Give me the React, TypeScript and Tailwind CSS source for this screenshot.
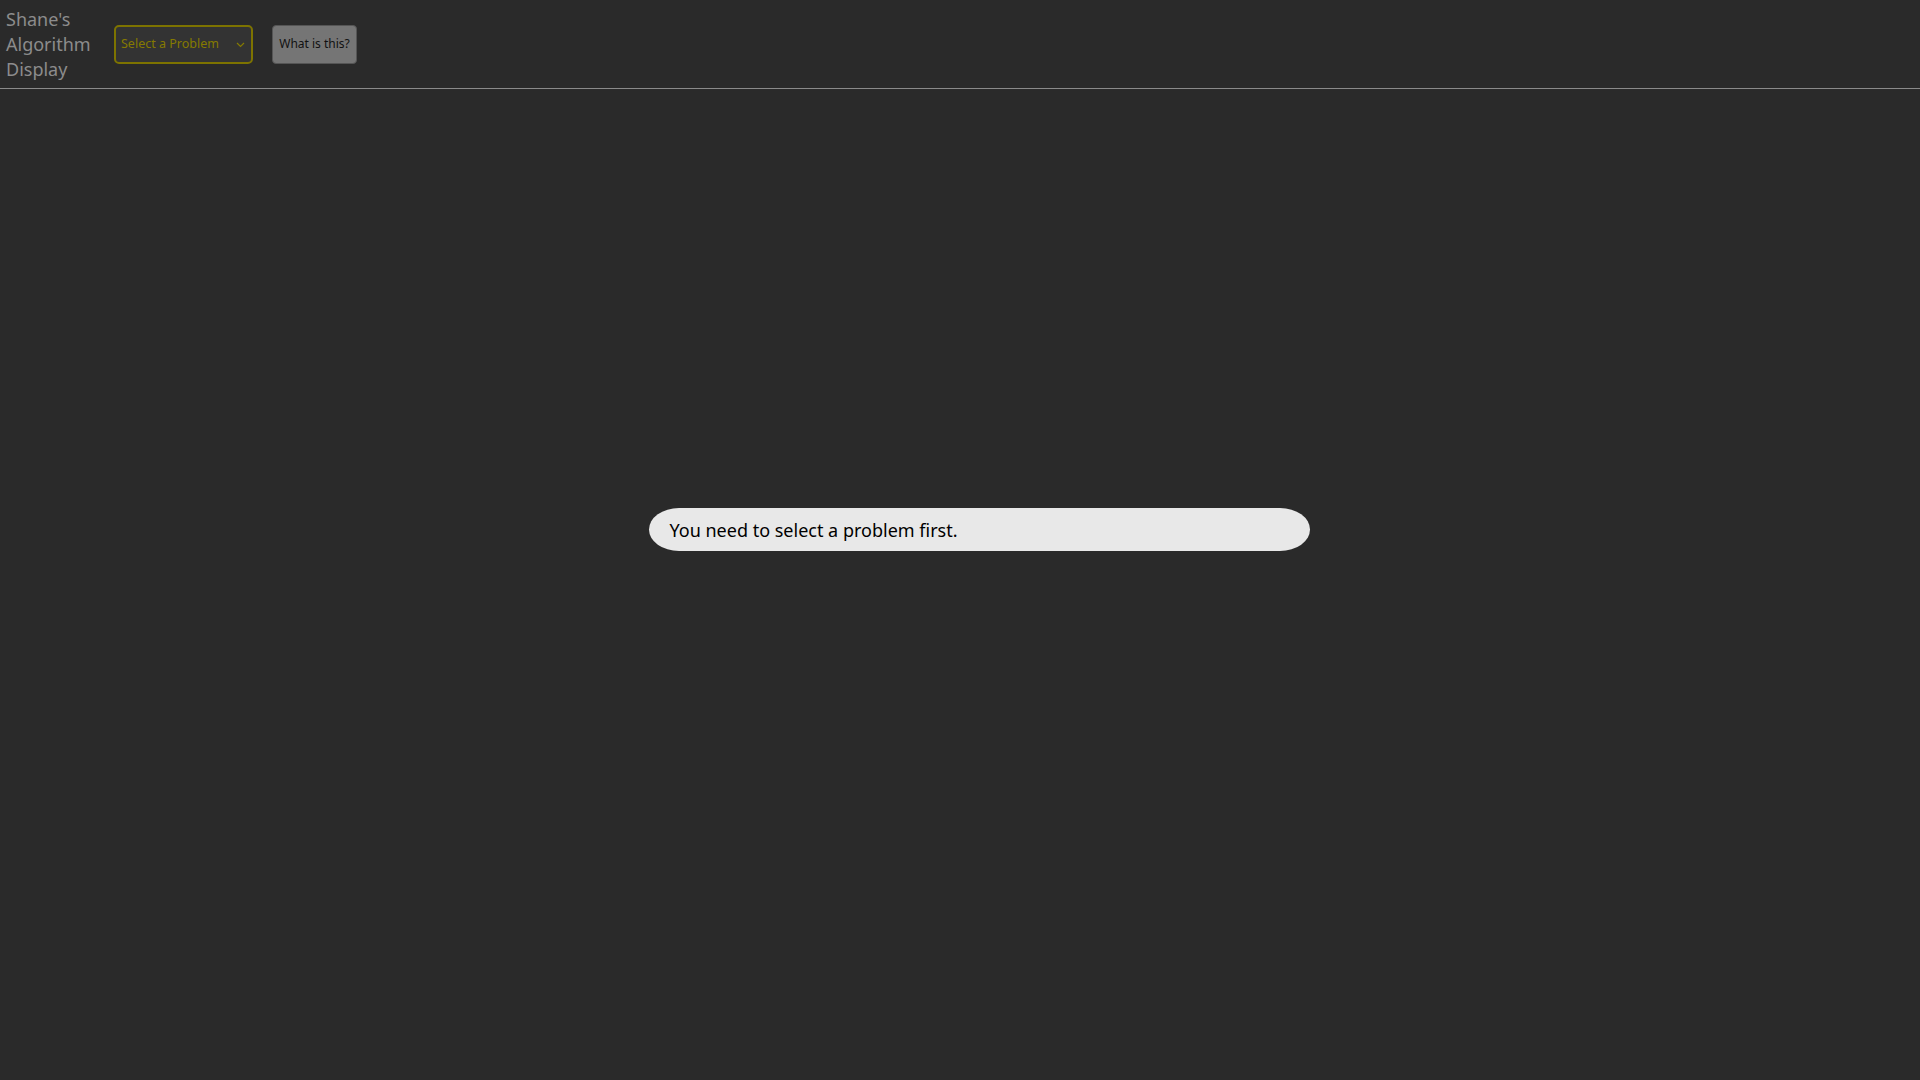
import React from "react";

export default function App() {
  return (
    <div className="min-h-screen w-full bg-[#2a2a2a] flex flex-col" style={{ fontFamily: '"Noto Sans", "Open Sans", sans-serif' }}>
      <header className="flex items-center h-[89px] border-b border-[#8a8a8a] shrink-0">
        <div className="pl-[6px] w-[114px] text-[18px] leading-[25px] text-[#8c8c8c]">
          Shane's
          <br />
          Algorithm
          <br />
          Display
        </div>
        <div className="relative w-[139px] h-[39px] rounded-[5px] border-2 border-[#7d7300] bg-[#333333] flex items-center pl-[5px]">
          <span className="text-[12.5px] text-[#857a00]">Select a Problem</span>
          <svg className="absolute right-[6px] top-[15px]" width="9" height="6" viewBox="0 0 9 6" fill="none">
            <path d="M1 1l3.5 3.5L8 1" stroke="#857a00" strokeWidth="1.2" />
          </svg>
        </div>
        <button className="ml-[19px] w-[85px] h-[39px] rounded-[4px] border border-[#555555] bg-[#757575] text-[12px] text-[#111111] flex items-center justify-center">
          What is this?
        </button>
      </header>
      <main className="flex-1 flex justify-center pt-[419px] pl-[38px]">
        <div className="w-[661px] h-[43px] rounded-[30px/50%] bg-[#e8e8e8] flex items-center pl-[21px] pt-[2px]">
          <span className="text-[18px] text-black">You need to select a problem first.</span>
        </div>
      </main>
    </div>
  );
}
